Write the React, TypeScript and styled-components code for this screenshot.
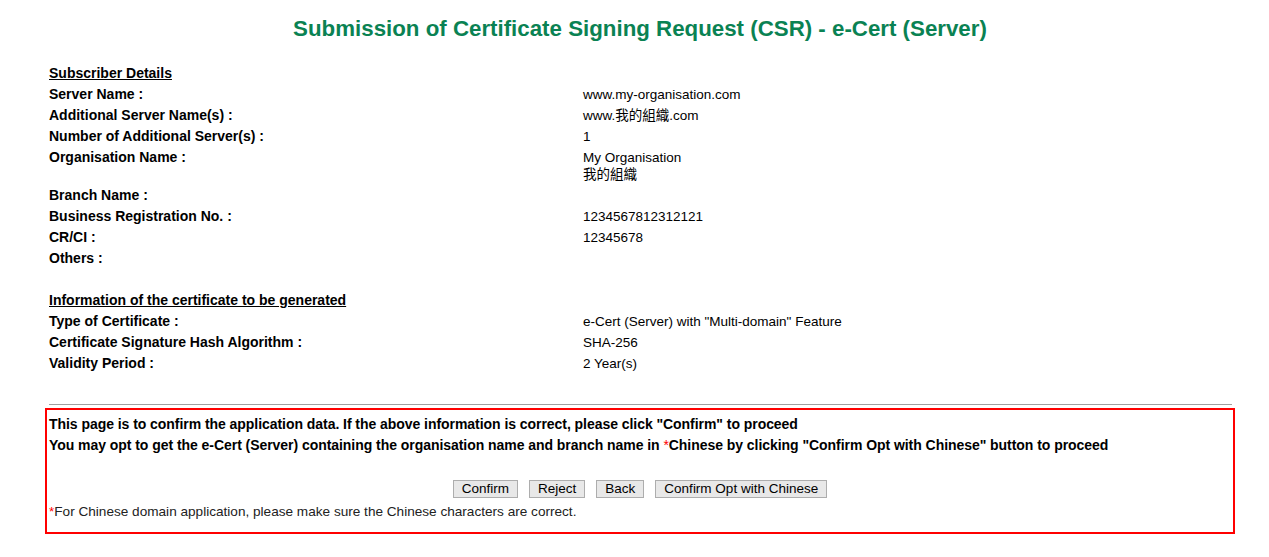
import styled, { createGlobalStyle } from "styled-components";

const GlobalStyle = createGlobalStyle`
  html, body {
    margin: 0;
    padding: 0;
    background: #ffffff;
  }
  body {
    font-family: "Liberation Sans", Arial, "Noto Sans CJK TC", sans-serif;
    color: #000000;
  }
`;

type Field = { label: string; value?: string[] };

const subscriber: Field[] = [
  { label: "Server Name :", value: ["www.my-organisation.com"] },
  { label: "Additional Server Name(s) :", value: ["www.我的組織.com"] },
  { label: "Number of Additional Server(s) :", value: ["1"] },
  { label: "Organisation Name :", value: ["My Organisation", "我的組織"] },
  { label: "Branch Name :" },
  { label: "Business Registration No. :", value: ["1234567812312121"] },
  { label: "CR/CI :", value: ["12345678"] },
  { label: "Others :" },
];

const certificate: Field[] = [
  { label: "Type of Certificate :", value: ['e-Cert (Server) with "Multi-domain" Feature'] },
  { label: "Certificate Signature Hash Algorithm :", value: ["SHA-256"] },
  { label: "Validity Period :", value: ["2 Year(s)"] },
];

const FieldRows = ({ fields }: { fields: Field[] }) => (
  <>
    {fields.map((f) => (
      <Row key={f.label}>
        <Label>{f.label}</Label>
        <Value>
          {f.value?.map((line) => (
            <div key={line}>{line}</div>
          ))}
        </Value>
      </Row>
    ))}
  </>
);

const App = () => {
  return (
    <>
      <GlobalStyle />
      <Page>
        <Title>Submission of Certificate Signing Request (CSR) - e-Cert (Server)</Title>
        <Details>
          <SectionHead>Subscriber Details</SectionHead>
          <FieldRows fields={subscriber} />
          <Spacer />
          <SectionHead>Information of the certificate to be generated</SectionHead>
          <FieldRows fields={certificate} />
        </Details>
        <Rule />
        <ConfirmBox>
          <Notice>
            This page is to confirm the application data. If the above information is correct, please click
            "Confirm" to proceed
          </Notice>
          <Notice>
            You may opt to get the e-Cert (Server) containing the organisation name and branch name in{" "}
            <Star>*</Star>Chinese by clicking "Confirm Opt with Chinese" button to proceed
          </Notice>
          <Actions>
            <Button type="button">Confirm</Button>
            <Button type="button">Reject</Button>
            <Button type="button">Back</Button>
            <Button type="button">Confirm Opt with Chinese</Button>
          </Actions>
          <Footnote>
            <Star>*</Star>For Chinese domain application, please make sure the Chinese characters are correct.
          </Footnote>
        </ConfirmBox>
      </Page>
    </>
  );
};

export default App;

const Page = styled.div`
  width: 1190px;
  margin-left: 45px;
  padding-top: 16px;
`;

const Title = styled.h1`
  margin: 0 0 21px;
  text-align: center;
  font-size: 22.3px;
  line-height: 26px;
  font-weight: 700;
  color: #0a8253;
`;

const Details = styled.div`
  display: flex;
  flex-direction: column;
`;

const SectionHead = styled.div`
  padding: 2px 4px;
  line-height: 17px;
  font-size: 14px;
  font-weight: 700;
  text-decoration: underline;
`;

const Row = styled.div`
  display: grid;
  grid-template-columns: 534px 1fr;
  font-size: 14px;
  line-height: 17px;
`;

const Label = styled.div`
  padding: 2px 4px;
  font-weight: 700;
`;

const Value = styled.div`
  padding: 2px 4px;
  min-height: 17px;
  font-size: 13.5px;
`;

const Spacer = styled.div`
  height: 21px;
`;

const Rule = styled.hr`
  margin: 30px 3px 3px 4px;
  border: none;
  border-top: 1px solid #a0a0a0;
  height: 0;
`;

const ConfirmBox = styled.div`
  border: 2px solid #ff0000;
  padding: 4px 0 10px;
`;

const Notice = styled.div`
  padding: 2px;
  font-size: 14px;
  line-height: 17px;
  font-weight: 700;
  letter-spacing: -0.05px;
`;

const Star = styled.span`
  color: #ff0000;
  font-weight: 400;
`;

const Actions = styled.div`
  display: flex;
  justify-content: center;
  gap: 11px;
  margin-top: 24px;
  margin-bottom: 3px;
`;

const Button = styled.button`
  height: 18px;
  padding: 0 8px;
  font-family: "Liberation Sans", Arial, sans-serif;
  font-size: 13.5px;
  line-height: 16px;
  color: #000000;
  background: #e8e8e8;
  border: 1px solid #adadad;
  border-radius: 0;
`;

const Footnote = styled.div`
  padding: 2px;
  font-size: 13.6px;
  line-height: 17px;
  color: #222222;
`;
